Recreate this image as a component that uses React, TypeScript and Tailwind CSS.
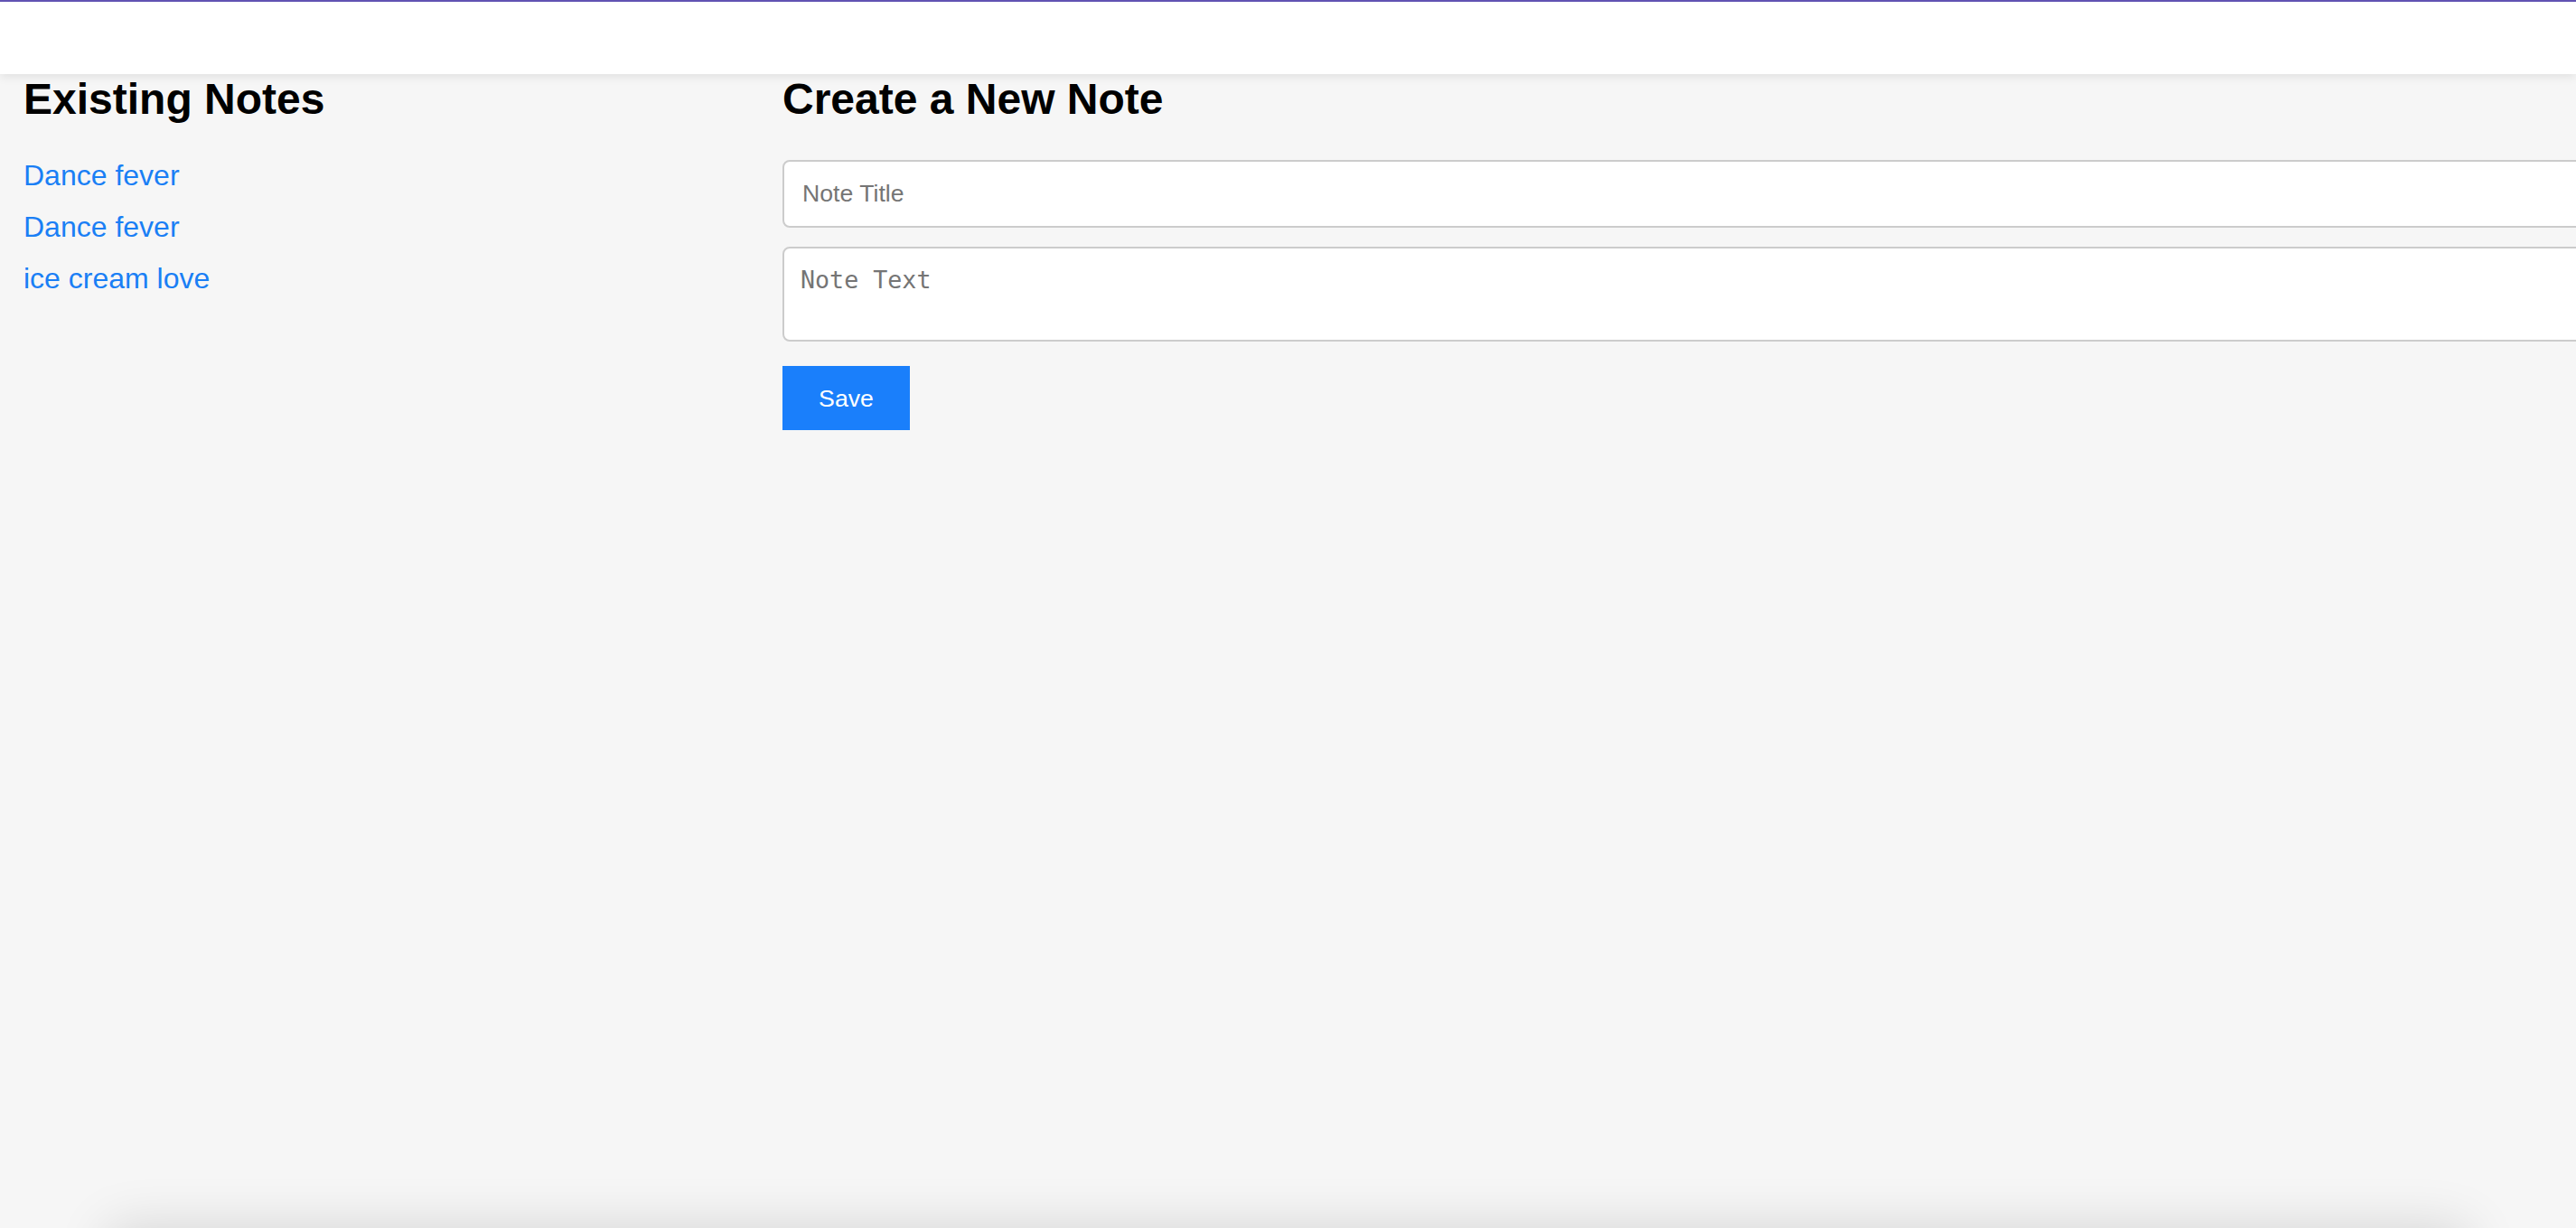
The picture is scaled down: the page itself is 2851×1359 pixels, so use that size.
import React from "react";

const notes = ["Dance fever", "Dance fever", "ice cream love"];

const App = () => {
  return (
    <div className="h-screen overflow-hidden bg-[#f6f6f6] font-['Liberation_Sans',Arial,sans-serif]">
      <header className="relative z-10 h-[82px] border-t-2 border-[#6153b3] bg-white shadow-[0_3px_10px_rgba(0,0,0,0.09)]"></header>

      <main className="flex min-h-[1277px] pl-[26px]">
        <section className="w-[840px] shrink-0">
          <h2 className="text-[48px] font-bold leading-[55px] text-black">
            Existing Notes
          </h2>
          <ul className="mt-[29px]">
            {notes.map((note, i) => (
              <li key={i} className="text-[32px] leading-[57px]">
                <a href="#" className="text-[#1a7ff5]">
                  {note}
                </a>
              </li>
            ))}
          </ul>
        </section>

        <section className="w-[2100px] shrink-0">
          <h2 className="text-[48px] font-bold leading-[55px] text-black">
            Create a New Note
          </h2>
          <form className="mt-[40px] flex flex-col items-start">
            <input
              type="text"
              placeholder="Note Title"
              className="h-[75px] w-full rounded-[8px] border-2 border-[#cccccc] bg-white px-[20px] text-[26.67px] placeholder:text-[#757575] outline-none"
            />
            <textarea
              placeholder="Note Text"
              className="mt-[21px] h-[105px] w-full resize-none rounded-[8px] border-2 border-[#cccccc] bg-white px-[18px] pt-[19px] font-['DejaVu_Sans_Mono',monospace] text-[26.67px] leading-[32px] placeholder:text-[#757575] outline-none"
            />
            <button
              type="button"
              className="mt-[27px] h-[71px] w-[141px] bg-[#1a7ffb] text-[26.67px] text-white"
            >
              Save
            </button>
          </form>
        </section>
      </main>

      <footer className="mx-[120px] h-[100px] bg-[#f6f6f6] shadow-[0_0_60px_rgba(0,0,0,0.14)]"></footer>
    </div>
  );
};

export default App;
